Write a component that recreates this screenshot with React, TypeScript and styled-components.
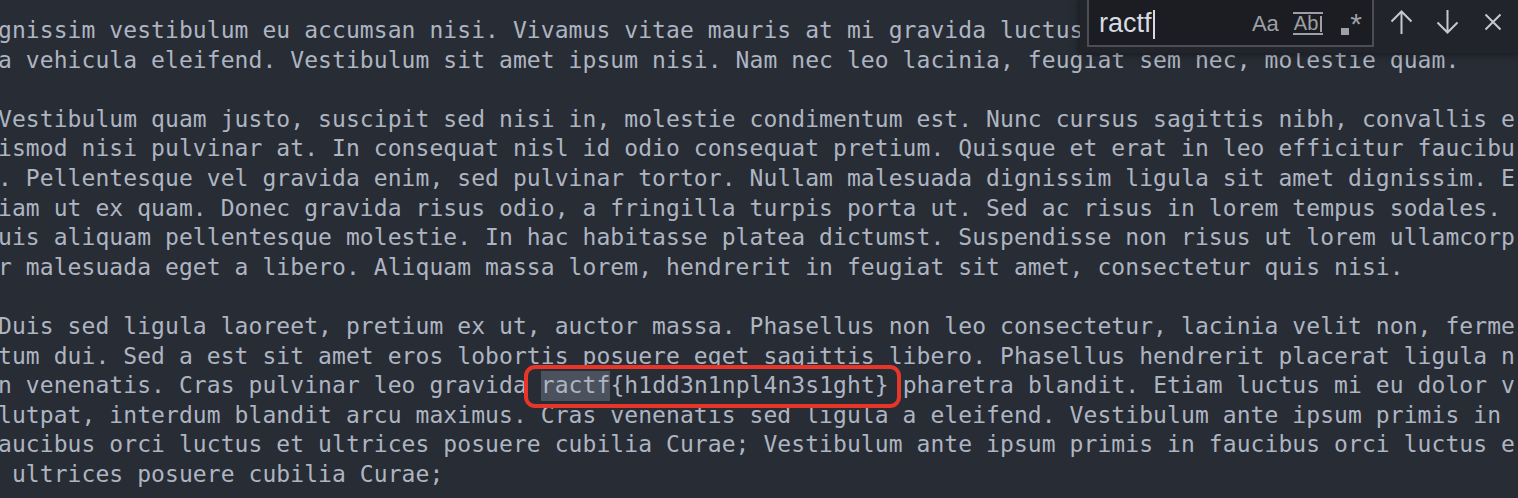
import React from "react";
import styled, { createGlobalStyle } from "styled-components";

const GlobalStyle = createGlobalStyle`
  html, body {
    margin: 0;
    padding: 0;
    background: #282c34;
    overflow: hidden;
  }
`;

const lines: string[] = [
  "gnissim vestibulum eu accumsan nisi. Vivamus vitae mauris at mi gravida luctus. Sed at nibh",
  "a vehicula eleifend. Vestibulum sit amet ipsum nisi. Nam nec leo lacinia, feugiat sem nec, molestie quam.",
  "",
  "Vestibulum quam justo, suscipit sed nisi in, molestie condimentum est. Nunc cursus sagittis nibh, convallis e",
  "ismod nisi pulvinar at. In consequat nisl id odio consequat pretium. Quisque et erat in leo efficitur faucibu",
  ". Pellentesque vel gravida enim, sed pulvinar tortor. Nullam malesuada dignissim ligula sit amet dignissim. E",
  "iam ut ex quam. Donec gravida risus odio, a fringilla turpis porta ut. Sed ac risus in lorem tempus sodales. ",
  "uis aliquam pellentesque molestie. In hac habitasse platea dictumst. Suspendisse non risus ut lorem ullamcorp",
  "r malesuada eget a libero. Aliquam massa lorem, hendrerit in feugiat sit amet, consectetur quis nisi.",
  "",
  "Duis sed ligula laoreet, pretium ex ut, auctor massa. Phasellus non leo consectetur, lacinia velit non, ferme",
  "tum dui. Sed a est sit amet eros lobortis posuere eget sagittis libero. Phasellus hendrerit placerat ligula n",
  "FLAG",
  "lutpat, interdum blandit arcu maximus. Cras venenatis sed ligula a eleifend. Vestibulum ante ipsum primis in ",
  "aucibus orci luctus et ultrices posuere cubilia Curae; Vestibulum ante ipsum primis in faucibus orci luctus e",
  " ultrices posuere cubilia Curae;",
];

const App: React.FC = () => {
  return (
    <Screen>
      <GlobalStyle />
      <Editor>
        {lines.map((l, i) =>
          l === "FLAG" ? (
            <Line key={i}>
              {"n venenatis. Cras pulvinar leo gravida "}
              <Flag>
                <Match>ractf</Match>
                {"{h1dd3n1npl4n3s1ght}"}
              </Flag>
              {" pharetra blandit. Etiam luctus mi eu dolor v"}
            </Line>
          ) : (
            <Line key={i}>{l}</Line>
          )
        )}
      </Editor>

      <FindWidget>
        <InputBox>
          <Query>ractf</Query>
          <Caret />
          <Options>
            <CaseToggle>Aa</CaseToggle>
            <WordToggle>
              Ab<WordBar />
            </WordToggle>
            <RegexToggle>
              <RegexDot />
              <RegexStar>*</RegexStar>
            </RegexToggle>
          </Options>
        </InputBox>
        <IconButton aria-label="Previous match">
          <svg width="23" height="25" viewBox="0 0 23 25" fill="none">
            <path d="M11.5 1.5V24M1.5 11.5L11.5 1.5L21.5 11.5" stroke="#c5c8ce" strokeWidth="2" />
          </svg>
        </IconButton>
        <IconButton aria-label="Next match">
          <svg width="23" height="25" viewBox="0 0 23 25" fill="none">
            <path d="M11.5 0V22.5M1.5 12.5L11.5 22.5L21.5 12.5" stroke="#c5c8ce" strokeWidth="2" />
          </svg>
        </IconButton>
        <IconButton aria-label="Close">
          <svg width="18" height="18" viewBox="0 0 18 18" fill="none">
            <path d="M1.5 1.5L16.5 16.5M16.5 1.5L1.5 16.5" stroke="#c5c8ce" strokeWidth="2" />
          </svg>
        </IconButton>
      </FindWidget>
    </Screen>
  );
};

const Screen = styled.div`
  position: relative;
  width: 1518px;
  height: 498px;
  overflow: hidden;
  background: #282c34;
`;

const Editor = styled.div`
  padding-top: 16px;
  margin-left: -2px;
  font-family: "DejaVu Sans Mono", "Liberation Mono", monospace;
  font-size: 23px;
  letter-spacing: 0.07px;
  line-height: 29.6px;
  color: #aeb5c2;
`;

const Line = styled.div`
  height: 29.6px;
  white-space: pre;
`;

const Flag = styled.span`
  position: relative;
  display: inline-block;
  vertical-align: top;
  height: 29.6px;

  &::after {
    content: "";
    position: absolute;
    top: -6px;
    bottom: -7px;
    left: -17px;
    right: -12px;
    border: 4.5px solid #e8352a;
    border-radius: 11px;
  }
`;

const Match = styled.span`
  display: inline-block;
  vertical-align: top;
  height: 29.6px;
  background: #4b525e;
`;

const FindWidget = styled.div`
  position: absolute;
  top: 0;
  right: 0;
  width: 438px;
  height: 53px;
  box-sizing: border-box;
  padding-left: 7px;
  display: flex;
  align-items: flex-start;
  background: #21252b;
  box-shadow: 0 0 8px 2px rgba(0, 0, 0, 0.4);
  font-family: "Liberation Sans", Arial, sans-serif;
`;

const InputBox = styled.div`
  width: 287px;
  height: 47px;
  box-sizing: border-box;
  display: flex;
  align-items: center;
  padding: 0 10px 0 10px;
  border: 2px solid #4b4e55;
  border-top: 0;
  background: #1b1d23;
`;

const Query = styled.span`
  font-size: 27px;
  color: #d7dae0;
  margin-top: 2px;
`;

const Caret = styled.span`
  width: 2px;
  height: 29px;
  margin-left: 1px;
  margin-top: 4px;
  background: #d7dae0;
`;

const Options = styled.div`
  margin-left: auto;
  display: flex;
  align-items: center;
  gap: 14px;
  color: #9da0a6;
  margin-top: 2px;
`;

const CaseToggle = styled.span`
  font-size: 22px;
  line-height: 1;
`;

const WordToggle = styled.span`
  display: flex;
  align-items: center;
  font-size: 20px;
  line-height: 17px;
  padding: 1px 1px;
  border-top: 2px solid #9da0a6;
  border-bottom: 2px solid #9da0a6;
`;

const WordBar = styled.span`
  width: 2px;
  height: 16px;
  margin-left: 2px;
  background: #9da0a6;
`;

const RegexToggle = styled.span`
  display: flex;
  align-items: flex-end;
  gap: 1px;
  margin-left: 4px;
  height: 22px;
`;

const RegexDot = styled.span`
  width: 8px;
  height: 7px;
  background: #9da0a6;
`;

const RegexStar = styled.span`
  font-size: 30px;
  line-height: 28px;
  align-self: flex-start;
  margin-top: -3px;
`;

const IconButton = styled.button`
  width: 46px;
  height: 44px;
  padding: 0;
  border: 0;
  background: transparent;
  display: flex;
  align-items: center;
  justify-content: center;
  &:first-of-type {
    margin-left: 4px;
  }
`;

export default App;
